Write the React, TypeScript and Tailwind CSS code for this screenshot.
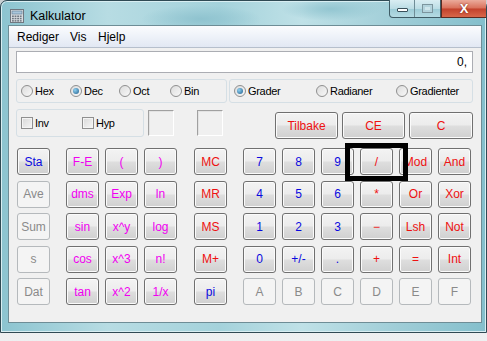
import type { ReactNode } from "react";

const font = { fontFamily: '"Liberation Sans", Arial, sans-serif' };

type Tone = "blue" | "magenta" | "red" | "off";

const toneClass: Record<Tone, string> = {
    blue: "text-[#0a0adf]",
    magenta: "text-[#f000f0]",
    red: "text-[#ee1111]",
    off: "text-[#8a8a8a]",
};

function Key({ label, tone, w = "w-[33px]" }: { label: string; tone: Tone; w?: string }) {
    if (tone === "off") {
        return (
            <div
                className={`${w} flex h-[27px] items-center justify-center rounded-[3px] border border-[#b5b9bc] bg-[#f4f4f4] text-[12px] text-[#8a8a8a]`}
            >
                {label}
            </div>
        );
    }
    return (
        <div
            className={`${w} flex h-[27px] items-center justify-center rounded-[3px] border border-[#707070] bg-[linear-gradient(#f3f3f3_0%,#ececec_48%,#dedede_52%,#d0d0d0_100%)] text-[12px] shadow-[inset_0_0_0_1px_#fbfbfb] ${toneClass[tone]}`}
        >
            {label}
        </div>
    );
}

function Radio({ checked, label, className = "" }: { checked?: boolean; label: string; className?: string }) {
    return (
        <div className={`flex items-center gap-[2px] ${className}`}>
            <span className="flex h-[12px] w-[12px] items-center justify-center rounded-full border border-[#8f8f8f] bg-[linear-gradient(135deg,#dcdcdc,#f8f8f8)]">
                {checked && (
                    <span className="h-[6px] w-[6px] rounded-full bg-[radial-gradient(circle_at_35%_35%,#8fd0f0,#1f5d8c)]" />
                )}
            </span>
            <span className="text-[11px] tracking-[-0.3px] text-black">{label}</span>
        </div>
    );
}

function Check({ label, className = "" }: { label: string; className?: string }) {
    return (
        <div className={`flex items-center gap-[2px] ${className}`}>
            <span className="h-[12px] w-[12px] border border-[#8f8f8f] bg-[linear-gradient(135deg,#d8d8d8,#f6f6f6)] shadow-[inset_0_0_0_1px_#f4f4f4]" />
            <span className="text-[11px] tracking-[-0.3px] text-black">{label}</span>
        </div>
    );
}

function Row({ children }: { children: ReactNode }) {
    return <div className="flex h-[27px]">{children}</div>;
}

function CalcIcon() {
    return (
        <svg width="14" height="14" viewBox="0 0 14 14">
            <rect x="0.5" y="0.5" width="13" height="13" fill="#d8dde2" stroke="#6f7780" />
            <rect x="2" y="2" width="10" height="3" fill="#a9c6dc" stroke="#5f7a90" strokeWidth="0.6" />
            {[0, 1, 2].map((r) =>
                [0, 1, 2, 3].map((c) => (
                    <rect key={`${r}-${c}`} x={2 + c * 2.6} y={6.5 + r * 2.3} width="1.8" height="1.5" fill="#6e7781" />
                )),
            )}
        </svg>
    );
}

export default function App() {
    return (
        <div className="relative h-[341px] w-[487px] overflow-hidden bg-[linear-gradient(#c9d0d3,#eef0f1)]" style={font}>
            <div className="flex h-[333px] flex-col rounded-t-[7px] border border-[#2f4a54] bg-[radial-gradient(ellipse_60px_14px_at_200px_18px,#8fc3cf,transparent),radial-gradient(ellipse_50px_12px_at_330px_8px,#93c6d1,transparent),linear-gradient(90deg,#8cc4d0_0%,#b7dce3_22%,#a4d2db_45%,#bfe1e7_62%,#9fcdd7_82%,#84bfcc_100%)] shadow-[inset_0_0_0_1px_#d8eef2]">
                {/* title bar */}
                <div className="flex h-[24px] shrink-0 items-start justify-between">
                    <div className="flex items-center gap-[6px] pl-[9px] pt-[6px]">
                        <CalcIcon />
                        <span className="text-[12.5px] text-black">Kalkulator</span>
                    </div>
                    <div className="flex h-[18px] -mt-px">
                        <div className="flex rounded-bl-[4px] border border-t-0 border-[#3f5c66] bg-[linear-gradient(#d9edf2_0%,#bcdde5_50%,#9ccbd6_52%,#b5dbe3_100%)]">
                            <div className="flex w-[25px] items-end justify-center border-r border-[#6f8d97] pb-[5px]">
                                <span className="h-[4px] w-[11px] rounded-[1px] border border-[#39505a] bg-white" />
                            </div>
                            <div className="flex w-[25px] items-center justify-center">
                                <span className="h-[9px] w-[11px] border border-[#7c959e] bg-[#cfe6ec] shadow-[inset_0_0_0_2px_#b3d3dc]" />
                            </div>
                        </div>
                        <div className="flex w-[45px] items-center justify-center border-b border-l border-[#5b2a20] bg-[linear-gradient(#ebab9b_0%,#d9705a_48%,#c2412b_52%,#d8674a_100%)]">
                            <span className="text-[13px] font-bold leading-none text-white [text-shadow:0_0_2px_#6b1c10]">X</span>
                        </div>
                    </div>
                </div>

                {/* client area */}
                <div className="ml-[7px] mr-[4px] flex h-[298px] flex-col border border-[#6e8d96] bg-[#f0f0f0]">
                    <div className="flex h-[22px] shrink-0 items-center border-b border-[#b6bfcc] bg-[linear-gradient(#fbfcfe_0%,#eef2f9_50%,#e2e8f3_100%)] pl-[8px] text-[12px] text-black">
                        <span className="w-[53px]">Rediger</span>
                        <span className="w-[28px]">Vis</span>
                        <span>Hjelp</span>
                    </div>

                    <div className="flex flex-col pl-[7px] pr-[8px]">
                        <div className="mt-[3px] flex h-[22px] items-center justify-end border border-[#abadb3] bg-white pr-[5px] text-[12px] text-black">
                            0,
                        </div>

                        <div className="mt-[6px] flex h-[24px] gap-[2px]">
                            <div className="flex w-[211px] items-center rounded-[3px] border border-[#d5dfe5] pl-[4px]">
                                <Radio label="Hex" className="w-[49px]" />
                                <Radio label="Dec" checked className="w-[49px]" />
                                <Radio label="Oct" className="w-[51px]" />
                                <Radio label="Bin" />
                            </div>
                            <div className="flex flex-1 items-center rounded-[3px] border border-[#d5dfe5] pl-[4px]">
                                <Radio label="Grader" checked className="w-[82px]" />
                                <Radio label="Radianer" className="w-[80px]" />
                                <Radio label="Gradienter" />
                            </div>
                        </div>

                        <div className="mt-[6px] flex h-[28px]">
                            <div className="flex w-[128px] items-center rounded-[3px] border border-[#d5dfe5] pl-[4px]">
                                <Check label="Inv" className="w-[61px]" />
                                <Check label="Hyp" />
                            </div>
                            <div className="ml-[4px] mt-[1px] h-[26px] w-[26px] border border-b-white border-l-[#a0a0a0] border-r-white border-t-[#a0a0a0] shadow-[inset_1px_1px_0_#e3e3e3]" />
                            <div className="ml-[23px] mt-[1px] h-[26px] w-[26px] border border-b-white border-l-[#a0a0a0] border-r-white border-t-[#a0a0a0] shadow-[inset_1px_1px_0_#e3e3e3]" />
                            <div className="ml-auto mt-[3px] flex gap-[4px]">
                                <Key label="Tilbake" tone="red" w="w-[63px]" />
                                <Key label="CE" tone="red" w="w-[63px]" />
                                <Key label="C" tone="red" w="w-[64px]" />
                            </div>
                        </div>

                        <div className="ml-[1px] mt-[11px] flex flex-col gap-[5.5px]">
                            <Row>
                                <Key label="Sta" tone="blue" />
                                <div className="ml-[16px] flex gap-[6px]">
                                    <Key label="F-E" tone="magenta" />
                                    <Key label="(" tone="magenta" />
                                    <Key label=")" tone="magenta" />
                                </div>
                                <div className="ml-[17px]"><Key label="MC" tone="red" /></div>
                                <div className="ml-[16px] flex gap-[6px]">
                                    <Key label="7" tone="blue" />
                                    <Key label="8" tone="blue" />
                                    <Key label="9" tone="blue" />
                                    <Key label="/" tone="red" />
                                    <Key label="Mod" tone="red" />
                                    <Key label="And" tone="red" />
                                </div>
                            </Row>
                            <Row>
                                <Key label="Ave" tone="off" />
                                <div className="ml-[16px] flex gap-[6px]">
                                    <Key label="dms" tone="magenta" />
                                    <Key label="Exp" tone="magenta" />
                                    <Key label="ln" tone="magenta" />
                                </div>
                                <div className="ml-[17px]"><Key label="MR" tone="red" /></div>
                                <div className="ml-[16px] flex gap-[6px]">
                                    <Key label="4" tone="blue" />
                                    <Key label="5" tone="blue" />
                                    <Key label="6" tone="blue" />
                                    <Key label="*" tone="red" />
                                    <Key label="Or" tone="red" />
                                    <Key label="Xor" tone="red" />
                                </div>
                            </Row>
                            <Row>
                                <Key label="Sum" tone="off" />
                                <div className="ml-[16px] flex gap-[6px]">
                                    <Key label="sin" tone="magenta" />
                                    <Key label="x^y" tone="magenta" />
                                    <Key label="log" tone="magenta" />
                                </div>
                                <div className="ml-[17px]"><Key label="MS" tone="red" /></div>
                                <div className="ml-[16px] flex gap-[6px]">
                                    <Key label="1" tone="blue" />
                                    <Key label="2" tone="blue" />
                                    <Key label="3" tone="blue" />
                                    <Key label="−" tone="red" />
                                    <Key label="Lsh" tone="red" />
                                    <Key label="Not" tone="red" />
                                </div>
                            </Row>
                            <Row>
                                <Key label="s" tone="off" />
                                <div className="ml-[16px] flex gap-[6px]">
                                    <Key label="cos" tone="magenta" />
                                    <Key label="x^3" tone="magenta" />
                                    <Key label="n!" tone="magenta" />
                                </div>
                                <div className="ml-[17px]"><Key label="M+" tone="red" /></div>
                                <div className="ml-[16px] flex gap-[6px]">
                                    <Key label="0" tone="blue" />
                                    <Key label="+/-" tone="blue" />
                                    <Key label="." tone="blue" />
                                    <Key label="+" tone="red" />
                                    <Key label="=" tone="red" />
                                    <Key label="Int" tone="red" />
                                </div>
                            </Row>
                            <Row>
                                <Key label="Dat" tone="off" />
                                <div className="ml-[16px] flex gap-[6px]">
                                    <Key label="tan" tone="magenta" />
                                    <Key label="x^2" tone="magenta" />
                                    <Key label="1/x" tone="magenta" />
                                </div>
                                <div className="ml-[17px]"><Key label="pi" tone="blue" /></div>
                                <div className="ml-[16px] flex gap-[6px]">
                                    <Key label="A" tone="off" />
                                    <Key label="B" tone="off" />
                                    <Key label="C" tone="off" />
                                    <Key label="D" tone="off" />
                                    <Key label="E" tone="off" />
                                    <Key label="F" tone="off" />
                                </div>
                            </Row>
                        </div>
                    </div>
                </div>
            </div>

            {/* highlight frame drawn over the "/" key */}
            <div className="absolute left-[345px] top-[143px] h-[38px] w-[63px] border-[5px] border-black" />
        </div>
    );
}
